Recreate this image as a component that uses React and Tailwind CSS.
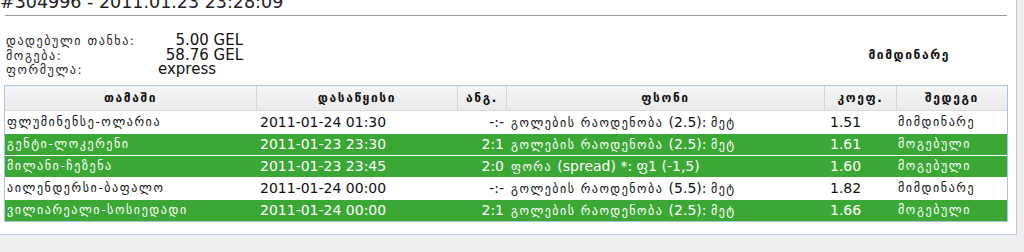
import React from "react";

const rows = [
  { team: "ფლუმინენსე-ოლარია", date: "2011-01-24 01:30", score: "-:-", bet: ["გოლების რაოდენობა ", "(2.5)", ": ", "", "მეტ"], coef: "1.51", res: "მიმდინარე", win: false },
  { team: "გენტი-ლოკერენი", date: "2011-01-23 23:30", score: "2:1", bet: ["გოლების რაოდენობა ", "(2.5)", ": ", "", "მეტ"], coef: "1.61", res: "მოგებული", win: true },
  { team: "მილანი-ჩეზენა", date: "2011-01-23 23:45", score: "2:0", bet: ["ფორა ", "(spread) *", ": ", "ფ1 (-1,5)", ""], coef: "1.60", res: "მოგებული", win: true },
  { team: "აილენდერსი-ბაფალო", date: "2011-01-24 00:00", score: "-:-", bet: ["გოლების რაოდენობა ", "(5.5)", ": ", "", "მეტ"], coef: "1.82", res: "მიმდინარე", win: false },
  { team: "ვილიარეალი-სოსიედადი", date: "2011-01-24 00:00", score: "2:1", bet: ["გოლების რაოდენობა ", "(2.5)", ": ", "", "მეტ"], coef: "1.66", res: "მოგებული", win: true },
];

const geo = "font-['DejaVu_Sans',sans-serif] text-[12px] tracking-[1.6px]";
const lat = "font-['DejaVu_Sans',sans-serif] text-[14px]";

function BetCell({ bet }) {
  const [a, b, c, d, e] = bet;
  return (
    <span>
      <span className="text-[12px] tracking-[1.5px]">{a}</span>
      <span className="text-[14px]">{b}</span>
      <span className="text-[14px]">{c}</span>
      {d ? <span className="text-[14px]">{d}</span> : null}
      {e ? <span className="text-[12px] tracking-[1.5px]">{e}</span> : null}
    </span>
  );
}

export default function App() {
  return (
    <div className="w-[1024px] h-[252px] overflow-hidden bg-[#efeeee] font-['DejaVu_Sans',sans-serif]">
      <div className="-mt-[8px] w-[1017px] bg-white border-r border-b border-[#b8cce6] pb-[12px]">
        <div className="text-[17.5px] leading-[20px] text-[#222]">#304996 - 2011.01.23 23:28:09</div>
        <div className="mt-[3px] ml-[5px] w-[1002px] border-t border-[#9a9a9a]"></div>
        <div className="mt-[17px] ml-[6px] w-[1000px] flex items-center justify-between">
          <div className="flex flex-col">
            <div className="flex items-baseline h-[14.5px]">
              <span className={`${geo} w-[150px] leading-[14px] text-[#222]`}>დადებული თანხა:</span>
              <span className="w-[87px] text-right text-[15px] leading-[14px] text-[#111]">5.00 GEL</span>
            </div>
            <div className="flex items-baseline h-[14.5px]">
              <span className={`${geo} w-[150px] leading-[14px] text-[#222]`}>მოგება:</span>
              <span className="w-[87px] text-right text-[15px] leading-[14px] text-[#111]">58.76 GEL</span>
            </div>
            <div className="flex items-baseline h-[14.5px]">
              <span className={`${geo} w-[150px] leading-[14px] text-[#222]`}>ფორმულა:</span>
              <span className="w-[87px] pl-[2px] text-[15px] leading-[14px] text-[#111]">express</span>
            </div>
          </div>
          <div className="text-[12px] tracking-[1.6px] font-bold text-[#111] mr-[56px]">მიმდინარე</div>
        </div>
        <div className="mt-[8px] ml-[4px] w-[1004px] border border-[#a9c3e2]">
          <div className="flex h-[25px] bg-gradient-to-b from-[#f5f5f5] to-[#ebebeb] border-b border-[#dcdcdc] text-[12px] tracking-[1.6px] font-bold text-[#111]">
            <div className="w-[252px] flex items-center justify-center border-r border-[#c9d7e8]">თამაში</div>
            <div className="w-[201px] flex items-center justify-center border-r border-[#c9d7e8]">დასაწყისი</div>
            <div className="w-[49px] flex items-center justify-center border-r border-[#c9d7e8]">ანგ.</div>
            <div className="w-[318px] flex items-center justify-center border-r border-[#c9d7e8]">ფსონი</div>
            <div className="w-[72px] flex items-center justify-center border-r border-[#c9d7e8]">კოეფ.</div>
            <div className="flex-1 flex items-center justify-center">შედეგი</div>
          </div>
          {rows.map((r, i) => (
            <div
              key={i}
              className={`flex h-[22px] items-center border-t border-white ${r.win ? "bg-[#3ba735] text-white" : "bg-white text-[#111]"}`}
            >
              <div className={`w-[252px] pl-[2px] whitespace-nowrap ${geo}`}>{r.team}</div>
              <div className={`w-[201px] pl-[3px] ${lat}`}>{r.date}</div>
              <div className={`w-[49px] pr-[3px] text-right ${lat}`}>{r.score}</div>
              <div className="w-[318px] pl-[4px] whitespace-nowrap overflow-hidden">
                <BetCell bet={r.bet} />
              </div>
              <div className={`w-[72px] pl-[5px] ${lat}`}>{r.coef}</div>
              <div className={`flex-1 pl-[1px] whitespace-nowrap ${geo}`}>{r.res}</div>
            </div>
          ))}
        </div>
      </div>
    </div>
  );
}
